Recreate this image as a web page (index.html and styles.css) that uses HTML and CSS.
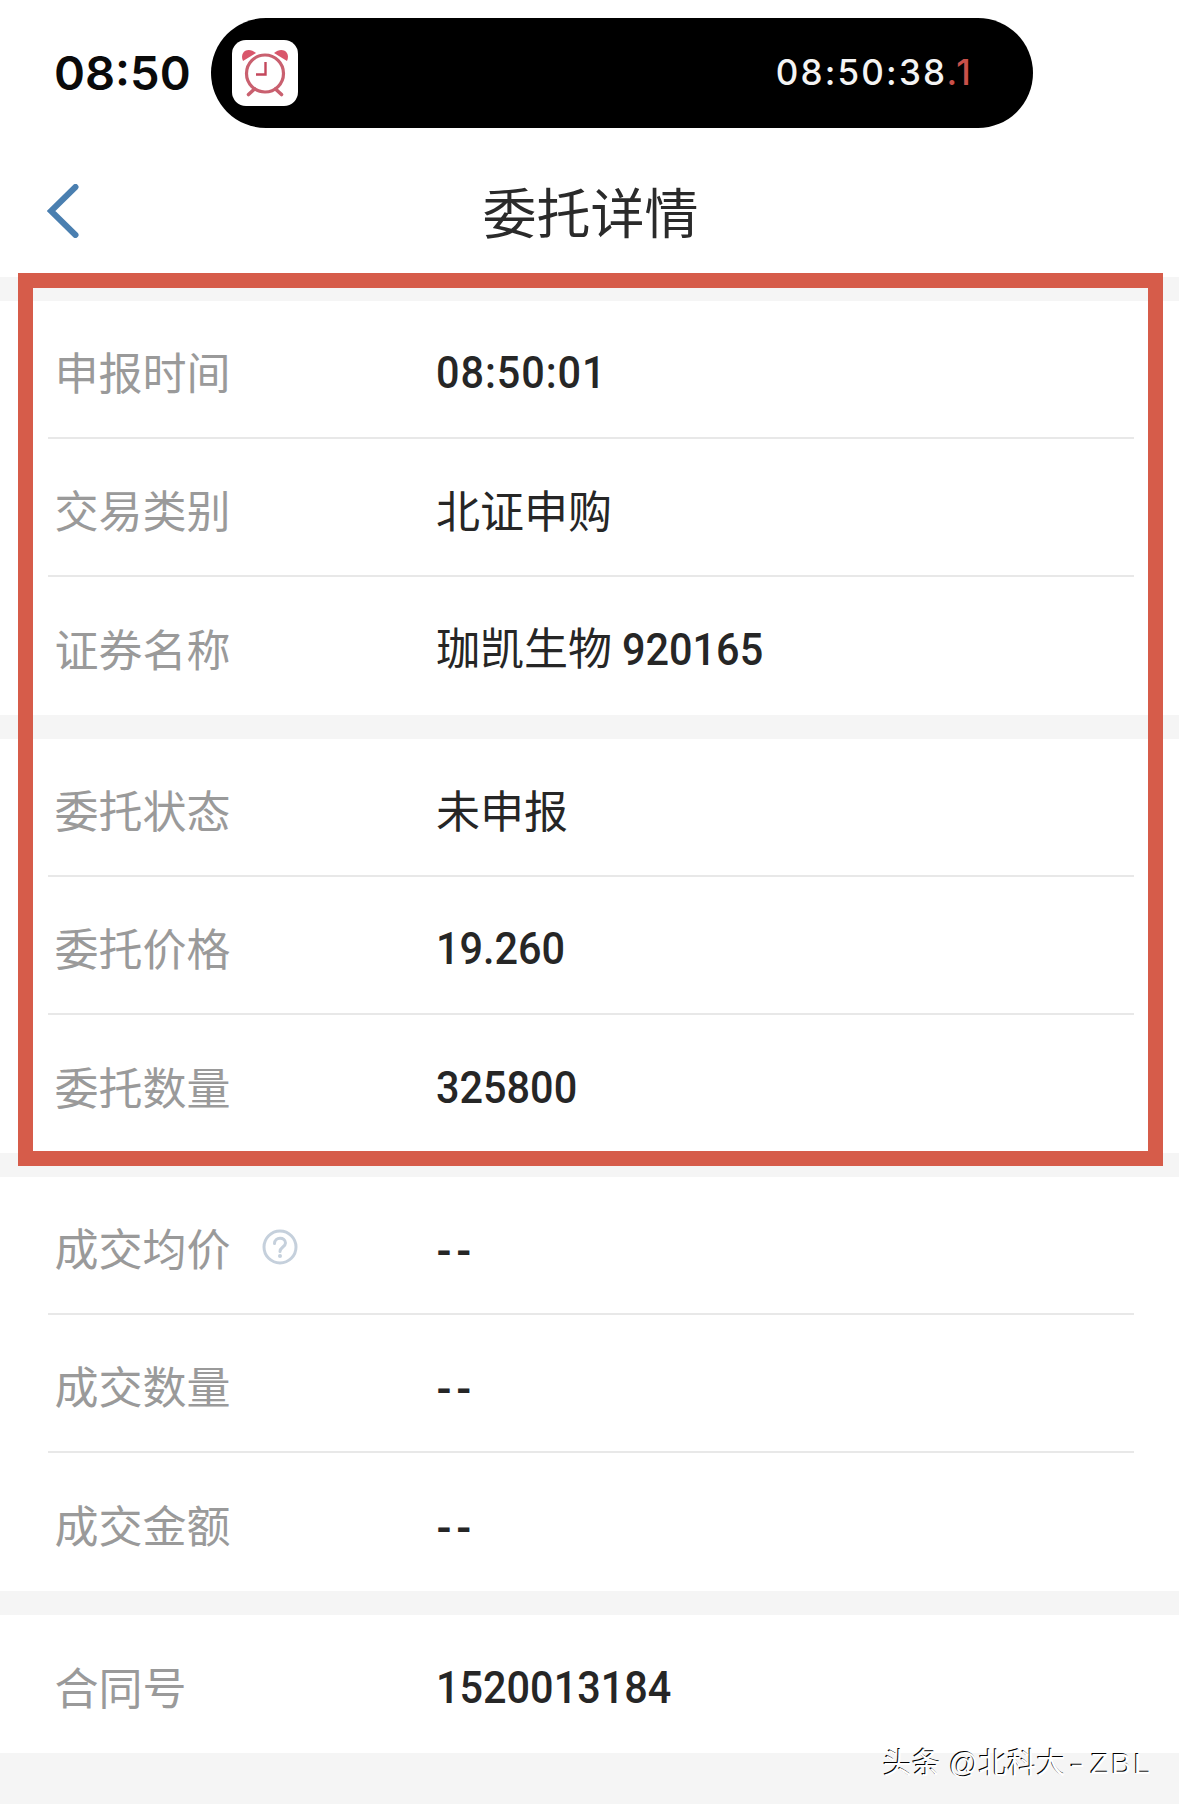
FILE: index.html
```html
<!DOCTYPE html>
<html lang="zh-CN">
<head>
<meta charset="utf-8">
<title>委托详情</title>
<link rel="stylesheet" href="styles.css">
</head>
<body>
<div class="page">
  <header class="status">
    <span class="clock">08:50</span>
    <div class="island">
      <span class="app-icon">
        <svg viewBox="0 0 66 66" width="66" height="66" aria-hidden="true">
          <path class="bell" d="M11 21 C7 12 16 6 24 13 Z"/>
          <path class="bell" d="M55 21 C59 12 50 6 42 13 Z"/>
          <circle class="ring" cx="33" cy="33.500" r="18.500"/>
          <path class="hand" d="M33.500 22 V34.500 H24"/>
          <path class="leg" d="M22.500 49 L16.500 54.500 M43.500 49 L49.500 54.500"/>
        </svg>
      </span>
      <span class="timer">08:50:38<span class="timer-dot">.</span><span class="timer-tenth">1</span></span>
    </div>
  </header>

  <nav class="nav">
    <svg class="back" viewBox="0 0 32 54" width="32" height="54" aria-hidden="true">
      <path d="M28.500 3 L4 27 L28.500 51"/>
    </svg>
    <h1 class="title">委托详情</h1>
  </nav>

  <section class="group">
    <div class="row"><span class="label">申报时间</span><span class="value"><span class="num num-time">08:50:01</span></span></div>
    <div class="row"><span class="label">交易类别</span><span class="value">北证申购</span></div>
    <div class="row"><span class="label">证券名称</span><span class="value">珈凯生物 <span class="num">920165</span></span></div>
  </section>
  <section class="group">
    <div class="row"><span class="label">委托状态</span><span class="value">未申报</span></div>
    <div class="row"><span class="label">委托价格</span><span class="value"><span class="num">19.260</span></span></div>
    <div class="row"><span class="label">委托数量</span><span class="value"><span class="num">325800</span></span></div>
  </section>
  <section class="group">
    <div class="row">
      <span class="label label-help">成交均价
        <svg class="help" viewBox="0 0 36 36" width="36" height="36" aria-hidden="true">
          <circle cx="18" cy="18" r="16"/>
          <path d="M12.500 14.500 C12.500 7.500 23.500 7.500 23.500 14 C23.500 18 18 18 18 22.500"/>
          <circle class="help-dot" cx="18" cy="27" r="2"/>
        </svg>
      </span>
      <span class="value value-dash">--</span>
    </div>
    <div class="row"><span class="label">成交数量</span><span class="value value-dash">--</span></div>
    <div class="row"><span class="label">成交金额</span><span class="value value-dash">--</span></div>
  </section>
  <section class="group">
    <div class="row"><span class="label">合同号</span><span class="value"><span class="num">1520013184</span></span></div>
  </section>

  <div class="highlight"></div>
  <div class="watermark">头条 @北科大<span class="watermark-dash">-</span><span class="watermark-latin">ZBL</span></div>
</div>
</body>
</html>
```

FILE: styles.css
```css
* { box-sizing: border-box; }
html, body { margin: 0; padding: 0; }
body {
  background: #fff;
  font-family: "Roboto", "Noto Sans CJK SC", sans-serif;
}
.page {
  position: relative;
  width: 1179px;
  height: 1804px;
  overflow: hidden;
  background: #f5f5f5;
}
.status {
  display: flex;
  align-items: center;
  gap: 22px;
  padding: 18px 0 0 54px;
  background: #fff;
}
.clock {
  width: 135px;
  font-family: "Inter", sans-serif;
  font-size: 47px;
  font-weight: 600;
  line-height: 108px;
  color: #0a0a0a;
  white-space: nowrap;
}
.island {
  display: flex;
  align-items: center;
  justify-content: space-between;
  width: 822px;
  height: 110px;
  padding: 0 60px 0 21px;
  border-radius: 55px;
  background: #000;
}
.app-icon {
  display: block;
  width: 66px;
  height: 66px;
  border-radius: 14px;
  background: #fff;
}
.app-icon svg { display: block; }
.bell { fill: #d9566b; }
.ring { fill: none; stroke: #c9606f; stroke-width: 3.200; }
.hand { fill: none; stroke: #c4485c; stroke-width: 2.400; }
.leg { fill: none; stroke: #c9606f; stroke-width: 3.600; stroke-linecap: round; }
.timer {
  margin-bottom: 2px;
  font-family: "Inter", sans-serif;
  font-size: 35px;
  font-weight: 500;
  letter-spacing: 2.200px;
  color: #f4f4f4;
  white-space: nowrap;
}
.timer-dot, .timer-tenth { color: #c9504a; }
.nav {
  position: relative;
  display: flex;
  align-items: center;
  justify-content: center;
  height: 149px;
  padding: 16px 0 0 2px;
  background: #fff;
}
.back {
  position: absolute;
  left: 47px;
  top: 56px;
  fill: none;
  stroke: #4a7fb0;
  stroke-width: 6;
  stroke-linecap: round;
}
.title {
  margin: 0;
  font-family: "Noto Sans CJK SC", sans-serif;
  font-size: 54px;
  font-weight: 400;
  line-height: 70px;
  color: #2a2a2a;
}
.group {
  margin-top: 24px;
  padding: 0 45px 0 48px;
  background: #fff;
}
.row {
  display: grid;
  grid-template-columns: 381.500px 1fr;
  align-items: center;
  height: 138px;
  padding: 3px 0 0 6.500px;
  border-bottom: 2px solid #e8e8e8;
}
.row:last-child { border-bottom: none; }
.label {
  font-family: "Noto Sans CJK SC", sans-serif;
  font-size: 44px;
  line-height: 60px;
  color: #9a9a9a;
}
.label-help {
  display: flex;
  align-items: center;
  gap: 31px;
}
.help { fill: none; stroke: #c5d0dc; stroke-width: 3; stroke-linecap: round; }
.help-dot { fill: #c5d0dc; stroke: none; }
.value {
  padding-top: 1.500px;
  font-family: "Noto Sans CJK SC", sans-serif;
  font-size: 44px;
  font-weight: 400;
  line-height: 60px;
  color: #262626;
  white-space: nowrap;
}
.value-dash {
  padding-top: 8px;
  font-family: "Roboto", sans-serif;
  font-size: 41px;
  font-weight: 700;
  letter-spacing: 3.500px;
}
.num {
  display: inline-block;
  font-family: "Roboto", sans-serif;
  font-size: 45px;
  font-weight: 500;
  transform: scaleX(0.92);
  transform-origin: left center;
}
.num-time { letter-spacing: 1px; }
.highlight {
  position: absolute;
  left: 18px;
  top: 273px;
  width: 1145px;
  height: 893px;
  border: 15px solid #d65c4a;
}
.watermark {
  position: absolute;
  left: 883px;
  top: 1745px;
  font-family: "Liberation Sans", "Noto Sans CJK SC", sans-serif;
  font-size: 29px;
  line-height: 38px;
  color: #fff;
  text-shadow: -1px -1px 0 #000;
  white-space: nowrap;
}
.watermark-dash {
  display: inline-block;
  margin: 0 11px 0 4px;
  font-size: 30px;
  transform: scaleX(1.5);
  transform-origin: left center;
}
.watermark-latin {
  font-size: 30px;
  letter-spacing: 2.500px;
}
```
